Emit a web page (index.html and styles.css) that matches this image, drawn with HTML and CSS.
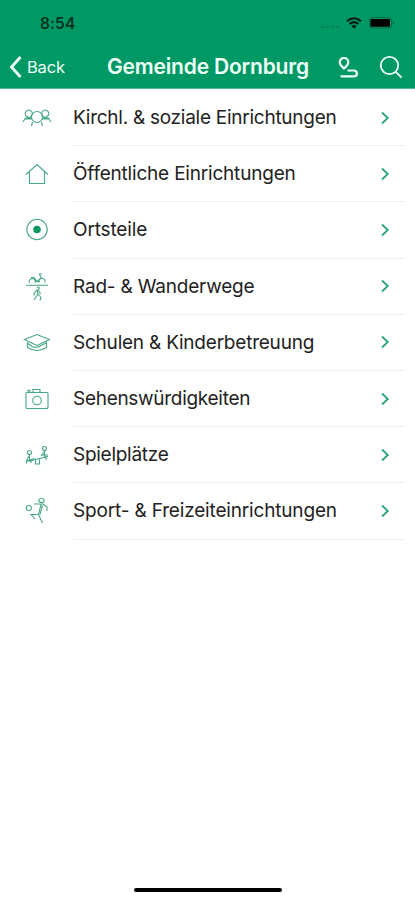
FILE: index.html
```html
<!DOCTYPE html>
<html lang="de">
<head>
<meta charset="utf-8">
<meta name="viewport" content="width=device-width, initial-scale=1">
<title>Gemeinde Dornburg</title>
<link rel="stylesheet" href="styles.css">
</head>
<body>
<div class="screen">
  <header class="header">
    <div class="status">
      <span class="time">8:54</span>
      <span class="signal"><i></i><i></i><i></i><i></i></span>
      <svg class="wifi" viewBox="0 0 16 12" width="16" height="12"><path d="M1 4.3Q8-1.7 15 4.3M3.6 7Q8 3.3 12.4 7" fill="none" stroke="currentColor" stroke-width="2"/><path d="M5.5 9Q8 7 10.500 9L8 11.700Z" fill="currentColor"/></svg>
      <svg class="battery" viewBox="0 0 26 12" width="26" height="12"><rect x=".5" y=".5" width="22" height="10.500" rx="2.500" fill="none" stroke="currentColor" opacity=".35"/><rect x="1.500" y="2" width="19.500" height="7.700" rx="1" fill="#000"/><path d="M24 4q2 1.800 0 3.600z" fill="currentColor" opacity=".5"/></svg>
    </div>
    <nav class="nav">
      <a class="back"><svg viewBox="0 0 14 24" width="14" height="24"><path d="M12.500 2L3.500 12L12.500 22"/></svg><span>Back</span></a>
      <h1>Gemeinde Dornburg</h1>
      <svg class="route" viewBox="0 0 20 22" width="20" height="22"><path d="M6 11.500C4 9.500 1.700 7.700 1.700 5.300a4.300 4.300 0 0 1 8.600 0C10.300 7.700 8 9.500 6 11.500Z"/><path d="M9.500 13.500H16a2.900 2.900 0 0 1 0 5.800H2.500"/></svg>
      <svg class="search" viewBox="0 0 24 24" width="24" height="24"><circle cx="10.500" cy="10.500" r="8.700"/><path d="M16.800 16.800L22.500 22.500"/></svg>
    </nav>
  </header>
  <main class="list">
    <div class="row">
      <svg class="icon" viewBox="0 0 36 36"><circle cx="18" cy="17" r="5.500"/><path d="M10 17.500q-5-2-3.500-5.500q3-4 6.500 0q1 3.500-3 5.500M26 17.500q-4-2-3-5.500q3.500-4 6.500 0q1.500 3.500-3.500 5.500M4 22l2.500-4h6.500M32 22l-2.500-4H23M6 19h7M23 19h7M13.500 22l-1 4M22.500 22l1 4"/></svg>
      <div class="body"><span class="label w1">Kirchl. &amp; soziale Einrichtungen</span><svg class="chevron" viewBox="0 0 10 14"><path d="M2 1.500L7.800 7L2 12.500"/></svg></div>
    </div>
    <div class="row">
      <svg class="icon" viewBox="0 0 36 36"><path d="M7 18.500L18 8.500L29 18.500M10.500 16V27.500H25.500V16"/></svg>
      <div class="body"><span class="label w2">Öffentliche Einrichtungen</span><svg class="chevron" viewBox="0 0 10 14"><path d="M2 1.500L7.800 7L2 12.500"/></svg></div>
    </div>
    <div class="row">
      <svg class="icon" viewBox="0 0 36 36"><circle cx="18" cy="17.500" r="10.200"/><circle class="solid" cx="18" cy="17.500" r="3.800"/></svg>
      <div class="body"><span class="label w3">Ortsteile</span><svg class="chevron" viewBox="0 0 10 14"><path d="M2 1.500L7.800 7L2 12.500"/></svg></div>
    </div>
    <div class="row">
      <svg class="icon" viewBox="0 0 36 36"><path d="M10.300 14v-2.500q3-4 6 0V14M20 13.500v-2.500q3-3.500 6 0v2.500M12 8.500h3l3 4 4-3.500-1.500-4h2.500M17 12.500h4M7 16.300h22M18 18.500q3-1.500 2 1.500t-2 1l-3 3.500v2M18 21l1 4-4 6M19 25l3 3.500-1 3M20 22l1.500 3"/></svg>
      <div class="body"><span class="label w4">Rad- &amp; Wanderwege</span><svg class="chevron" viewBox="0 0 10 14"><path d="M2 1.500L7.800 7L2 12.500"/></svg></div>
    </div>
    <div class="row">
      <svg class="icon" viewBox="0 0 36 36"><path d="M5.500 14.500L18 9.500L30.500 14.500L18 20.500ZM8.500 17v5.500q9.500 6 19 0V17M9 18.500l4 3q5 2 9-1l6-3"/></svg>
      <div class="body"><span class="label w5">Schulen &amp; Kinderbetreuung</span><svg class="chevron" viewBox="0 0 10 14"><path d="M2 1.500L7.800 7L2 12.500"/></svg></div>
    </div>
    <div class="row">
      <svg class="icon" viewBox="0 0 36 36"><rect x="7" y="11.500" width="22" height="16" rx="1"/><path d="M14 11.500V8.500h7v3M9 11.500V9.200h2v2.300"/><circle cx="18" cy="19.500" r="4.300"/></svg>
      <div class="body"><span class="label w6">Sehenswürdigkeiten</span><svg class="chevron" viewBox="0 0 10 14"><path d="M2 1.500L7.800 7L2 12.500"/></svg></div>
    </div>
    <div class="row">
      <svg class="icon" viewBox="0 0 36 36"><circle cx="10.500" cy="15.500" r="2"/><circle cx="25.500" cy="11.500" r="2"/><path d="M10.500 18v5l5-1.500M10 19l-2.500 5v2.500M7 24h5v2M8 23.500h5L29 19.500M25.500 14v6M25 15l-3 4M22 18h7M27 19v4M16.500 21.500v5.500h4v-6"/></svg>
      <div class="body"><span class="label w7">Spielplätze</span><svg class="chevron" viewBox="0 0 10 14"><path d="M2 1.500L7.800 7L2 12.500"/></svg></div>
    </div>
    <div class="row">
      <svg class="icon" viewBox="0 0 36 36"><ellipse cx="22.500" cy="7.500" rx="2.700" ry="2"/><circle cx="9.800" cy="15" r="2.500"/><path d="M15 11h9l4 3v4M22 11.500l-2.500 10L23.500 30M23.500 12.500l-2.500 9M20 21.500h-8l4 4.500"/></svg>
      <div class="body"><span class="label w8">Sport- &amp; Freizeiteinrichtungen</span><svg class="chevron" viewBox="0 0 10 14"><path d="M2 1.500L7.800 7L2 12.500"/></svg></div>
    </div>
  </main>
  <div class="home"></div>
</div>
</body>
</html>
```
FILE: styles.css
```css
* { box-sizing: border-box; }
body { margin: 0; background: #fff; font-family: Inter, "Liberation Sans", sans-serif; }
.screen { width: 415px; height: 900px; display: flex; flex-direction: column; overflow: hidden; }
.header { height: 89px; flex: none; background: #009966; border-bottom: 1px solid #55b891; }
.status { height: 46px; display: flex; align-items: center; padding: 0 20px 0 40px; color: #001b10; }
.time { font-size: 15.500px; font-weight: 600; letter-spacing: .1px; flex: 1; color: #06331f; }
.signal { display: flex; gap: 2px; margin: 8px 7px 0 0; }
.signal i { width: 3px; height: 2px; background: #087f55; }
.wifi { margin-right: 7px; }
.nav { height: 42px; display: flex; align-items: center; color: #effff6; padding-left: 8px; }
.nav svg { fill: none; stroke: currentColor; stroke-width: 2; flex: none; }
.back { display: flex; align-items: center; gap: 5px; width: 99px; }
.nav .back svg { stroke-width: 2.800; }
.back span { font-size: 16.500px; letter-spacing: -.2px; }
h1 { margin: 0; width: 231px; font-size: 21px; line-height: 26px; font-weight: 600; white-space: nowrap; letter-spacing: -.18px; }
.nav .route { stroke-width: 2.200; margin: 2px 21px 0 0; }
.nav .search { stroke-width: 1.800; }
.list { flex: 1; padding-top: 1px; }
.row { height: 56.200px; display: flex; align-items: center; }
.icon { width: 36px; height: 36px; margin: 0 18.500px 0 18.500px; fill: none; stroke: #48a783; stroke-width: 1.100; flex: none; }
.icon .solid { fill: #109761; stroke: none; }
.body { width: 332px; height: 100%; display: flex; align-items: center; justify-content: space-between; padding: 0 15px 0 0; border-bottom: 1px solid #f0f0f0; }
.label { font-size: 19px; font-weight: 400; color: #222; white-space: nowrap; }
.w1 { letter-spacing: -.26px; }
.w2 { letter-spacing: -.2px; }
.w3 { letter-spacing: -.15px; }
.w4 { letter-spacing: -.2px; }
.w5 { letter-spacing: -.22px; }
.w6 { letter-spacing: -.29px; }
.w7 { letter-spacing: -.27px; }
.w8 { letter-spacing: -.17px; }
.chevron { width: 10px; height: 14px; fill: none; stroke: #27a477; stroke-width: 1.800; }
.home { width: 148px; height: 4px; border-radius: 2px; background: #000; margin: 0 auto 8px; }
```
